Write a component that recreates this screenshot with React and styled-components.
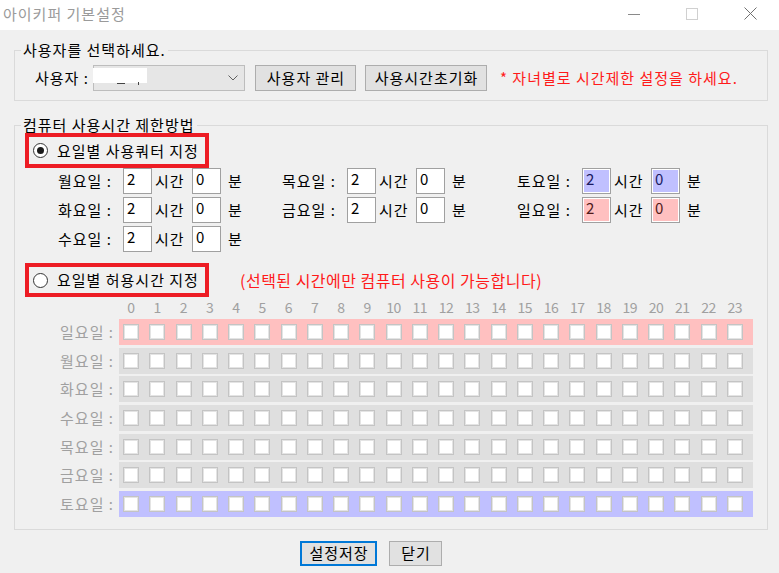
import React from "react";
import styled, { createGlobalStyle } from "styled-components";

const Global = createGlobalStyle`
  html, body { margin: 0; padding: 0; background: #f0f0f0; }
  body { font-family: "Noto Sans CJK KR", "Noto Sans", sans-serif; }
  * { box-sizing: border-box; }
`;

const Window = styled.div`
  width: 779px;
  height: 573px;
  overflow: hidden;
  background: #f0f0f0;
  font-size: 15px;
  letter-spacing: 1px;
  color: #000;
  display: flex;
  flex-direction: column;
`;

const TitleBar = styled.div`
  height: 30px;
  background: #fff;
  display: flex;
  align-items: center;
  padding-left: 3px;
`;

const Title = styled.div`
  flex: 1;
  color: #9a9a9a;
  font-size: 15px;
  line-height: 20px;
  margin-top: -3px;
`;

const CaptionButton = styled.div`
  width: ${(p) => p.$w}px;
  height: 30px;
  display: flex;
  align-items: center;
  justify-content: center;
  margin-top: -3px;
`;

const Body = styled.div`
  flex: 1;
  padding: 12px 11px 0 14px;
  display: flex;
  flex-direction: column;
`;

const Group = styled.fieldset`
  margin: ${(p) => p.$top || 0}px 0 0 0;
  padding: 0 0 ${(p) => p.$bottom || 0}px 0;
  border: 1px solid #dadada;
  min-width: 0;
`;

const Legend = styled.legend`
  margin-left: 6px;
  padding: 0 2px;
  font-size: 15px;
  line-height: 16px;
  color: #000;
`;

const UserRow = styled.div`
  display: flex;
  align-items: center;
  margin-top: 7px;
  padding-left: 20px;
  height: 26px;
`;

const FieldLabel = styled.div`
  width: 58px;
  line-height: 20px;
`;

const Combo = styled.div`
  position: relative;
  width: 152px;
  height: 26px;
  background: #e6e6e6;
  border: 1px solid #bdbdbd;
  display: flex;
  align-items: center;
  justify-content: flex-end;
  padding-right: 6px;
`;

const Mask = styled.div`
  position: absolute;
  left: -1px;
  top: 2px;
  width: 54px;
  height: 15px;
  background: #fff;
`;

const Tick = styled.div`
  position: absolute;
  left: ${(p) => p.$x}px;
  top: ${(p) => p.$y}px;
  width: ${(p) => p.$w}px;
  height: ${(p) => p.$h}px;
  background: #444;
`;

const Button = styled.button`
  font-family: inherit;
  font-size: 15px;
  letter-spacing: 1px;
  line-height: 20px;
  color: #000;
  height: ${(p) => p.$h || 26}px;
  width: ${(p) => p.$w}px;
  margin-left: ${(p) => p.$ml || 0}px;
  padding: 0 0 0 1px;
  background: #e1e1e1;
  border: ${(p) => (p.$focus ? "2px solid #0078d7" : "1px solid #adadad")};
  border-radius: 0;
`;

const RedNote = styled.div`
  color: #ff1a1a;
  font-size: ${(p) => p.$size || 15}px;
  letter-spacing: ${(p) => p.$ls ?? 1}px;
  line-height: 20px;
  margin-left: ${(p) => p.$ml}px;
  white-space: nowrap;
`;

const OptionRow = styled.div`
  display: flex;
  align-items: center;
  margin-top: ${(p) => p.$top || 0}px;
  padding-left: 10px;
`;

const RedFrame = styled.div`
  width: 184px;
  height: ${(p) => p.$h}px;
  border: 4px solid #ed1c24;
  display: flex;
  align-items: center;
  padding-left: 4px;
  gap: 9px;
`;

const Radio = styled.div`
  width: 15px;
  height: 15px;
  flex: none;
  border-radius: 50%;
  border: 1px solid #333;
  background: #fff;
  display: flex;
  align-items: center;
  justify-content: center;
  &::after {
    content: "";
    width: 7px;
    height: 7px;
    border-radius: 50%;
    background: ${(p) => (p.$checked ? "#1a1a1a" : "transparent")};
  }
`;

const OptionText = styled.div`
  font-size: 15px;
  letter-spacing: 1px;
  line-height: 20px;
  white-space: nowrap;
`;

const QuotaGrid = styled.div`
  display: grid;
  grid-template-columns: 224px 235px 1fr;
  grid-auto-rows: 26px;
  row-gap: 3px;
  margin-left: 43px;
`;

const QuotaCell = styled.div`
  display: flex;
  align-items: center;
`;

const DayName = styled.div`
  width: 65px;
  line-height: 20px;
  white-space: nowrap;
`;

const NumBox = styled.div`
  width: 29px;
  height: 26px;
  flex: none;
  border: 1px solid #a0a0a0;
  box-shadow: inset 0 0 0 1px #fff;
  background: ${(p) => p.$bg || "#fff"};
  color: ${(p) => p.$fg || "#000"};
  font-size: 15px;
  line-height: 18px;
  padding: 1px 0 0 3px;
`;

const Unit = styled.div`
  width: ${(p) => p.$w}px;
  padding-left: ${(p) => p.$pl}px;
  line-height: 20px;
  white-space: nowrap;
`;

const HourHeader = styled.div`
  display: grid;
  grid-template-columns: repeat(24, 26.25px);
  margin: 0 0 2px 108px;
  height: 20px;
`;

const HourLabel = styled.div`
  width: 16px;
  text-align: center;
  color: #a0a0a0;
  font-size: 14px;
  line-height: 20px;
  letter-spacing: -0.5px;
  white-space: nowrap;
  display: flex;
  justify-content: center;
`;

const DayRows = styled.div`
  display: flex;
  flex-direction: column;
  gap: 2.67px;
`;

const DayRow = styled.div`
  display: flex;
  align-items: center;
`;

const DayRowLabel = styled.div`
  width: 104px;
  text-align: right;
  padding-right: 5px;
  color: #a0a0a0;
  line-height: 20px;
  white-space: nowrap;
`;

const Strip = styled.div`
  width: 634px;
  height: 26px;
  background: ${(p) => p.$bg};
  display: grid;
  grid-template-columns: repeat(24, 26.25px);
  align-items: center;
  padding-left: 4px;
`;

const Check = styled.div`
  width: 16px;
  height: 16px;
  background: #fff;
  border: 1px solid #c4c4c4;
  box-shadow: inset 0 0 0 1px #e4e4e4;
`;

const Footer = styled.div`
  display: flex;
  justify-content: center;
  gap: 12px;
  margin-top: 11px;
  padding-right: 40px;
`;

const quota = [
  ["월요일 :", "목요일 :", "토요일 :"],
  ["화요일 :", "금요일 :", "일요일 :"],
  ["수요일 :", null, null],
];

const colors = {
  "토요일 :": { bg: "#c0c0ff", fg: "#1a1a60" },
  "일요일 :": { bg: "#ffc0c0", fg: "#501a1a" },
};

const days = [
  ["일요일 :", "#ffc0c0"],
  ["월요일 :", "#dfdfdf"],
  ["화요일 :", "#dfdfdf"],
  ["수요일 :", "#dfdfdf"],
  ["목요일 :", "#dfdfdf"],
  ["금요일 :", "#dfdfdf"],
  ["토요일 :", "#c0c0ff"],
];

const hours = Array.from({ length: 24 }, (_, i) => i);

export default function App() {
  return (
    <Window>
      <Global />
      <TitleBar>
        <Title>아이키퍼 기본설정</Title>
        <CaptionButton $w={58}>
          <svg width="12" height="12" viewBox="0 0 12 12">
            <line x1="0" y1="6.5" x2="12" y2="6.5" stroke="#8a8a8a" strokeWidth="1" />
          </svg>
        </CaptionButton>
        <CaptionButton $w={58}>
          <svg width="12" height="12" viewBox="0 0 12 12">
            <rect x="0.5" y="0.5" width="11" height="11" fill="none" stroke="#d0d0d0" strokeWidth="1" />
          </svg>
        </CaptionButton>
        <CaptionButton $w={58}>
          <svg width="13" height="13" viewBox="0 0 13 13">
            <path d="M0.5 0.5 L12.5 12.5 M12.5 0.5 L0.5 12.5" stroke="#707070" strokeWidth="1" />
          </svg>
        </CaptionButton>
      </TitleBar>
      <Body>
        <Group $bottom={9}>
          <Legend>사용자를 선택하세요.</Legend>
          <UserRow>
            <FieldLabel>사용자 :</FieldLabel>
            <Combo>
              <Mask />
              <Tick $x={23} $y={17} $w={8} $h={1} />
              <Tick $x={44} $y={16} $w={1} $h={3} />
              <svg width="10" height="6" viewBox="0 0 10 6">
                <polyline points="0.5,0.5 5,5 9.5,0.5" fill="none" stroke="#606060" strokeWidth="1" />
              </svg>
            </Combo>
            <Button $w={101} $ml={10}>사용자 관리</Button>
            <Button $w={122} $ml={9}>사용시간초기화</Button>
            <RedNote $ml={13}>* 자녀별로 시간제한 설정을 하세요.</RedNote>
          </UserRow>
        </Group>

        <Group $top={16} $bottom={12}>
          <Legend>컴퓨터 사용시간 제한방법</Legend>
          <OptionRow>
            <RedFrame $h={35}>
              <Radio $checked />
              <OptionText>요일별 사용쿼터 지정</OptionText>
            </RedFrame>
          </OptionRow>
          <QuotaGrid>
            {quota.flat().map((d, i) =>
              d ? (
                <QuotaCell key={i}>
                  <DayName>{d}</DayName>
                  <NumBox $bg={colors[d]?.bg} $fg={colors[d]?.fg}>2</NumBox>
                  <Unit $w={40} $pl={3}>시간</Unit>
                  <NumBox $bg={colors[d]?.bg} $fg={colors[d]?.fg}>0</NumBox>
                  <Unit $w={30} $pl={7}>분</Unit>
                </QuotaCell>
              ) : (
                <QuotaCell key={i} />
              )
            )}
          </QuotaGrid>
          <OptionRow $top={11}>
            <RedFrame $h={34}>
              <Radio />
              <OptionText>요일별 허용시간 지정</OptionText>
            </RedFrame>
            <RedNote $ml={31} $size={16} $ls={0.5}>(선택된 시간에만 컴퓨터 사용이 가능합니다)</RedNote>
          </OptionRow>
          <HourHeader>
            {hours.map((h) => (
              <HourLabel key={h}>{h}</HourLabel>
            ))}
          </HourHeader>
          <DayRows>
            {days.map(([d, bg]) => (
              <DayRow key={d}>
                <DayRowLabel>{d}</DayRowLabel>
                <Strip $bg={bg}>
                  {hours.map((h) => (
                    <Check key={h} />
                  ))}
                </Strip>
              </DayRow>
            ))}
          </DayRows>
        </Group>

        <Footer>
          <Button $w={77} $h={25} $focus>설정저장</Button>
          <Button $w={53} $h={25}>닫기</Button>
        </Footer>
      </Body>
    </Window>
  );
}
